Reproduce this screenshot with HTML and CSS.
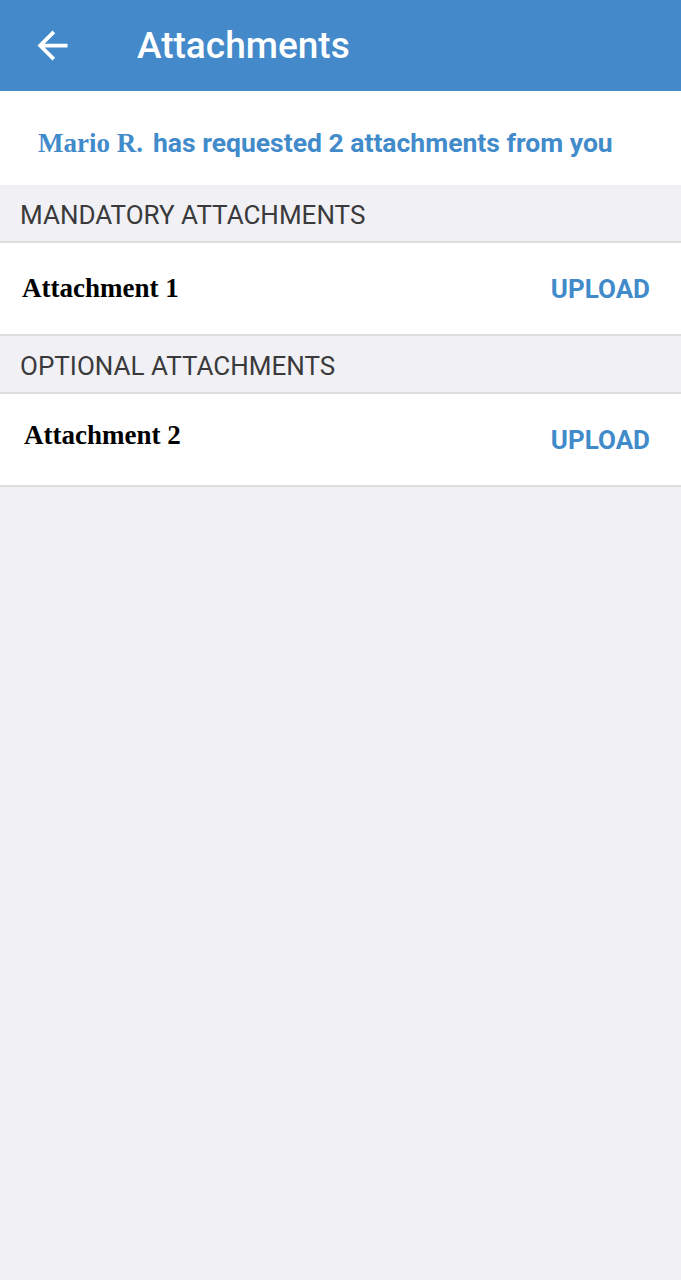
FILE: index.html
```html
<!DOCTYPE html>
<html lang="en">
<head>
    <meta name="viewport" content="width=device-width, initial-scale=1">
    <title>Attachments</title>
    <link rel="stylesheet" href="styles.css">
</head>
<body>
    <header class="topbar">
        <button class="back" type="button" aria-label="Back">
            <svg width="45" height="45" viewBox="0 0 24 24"><path fill="#fff" d="M20 11H7.83l5.59-5.59L12 4l-8 8 8 8 1.41-1.41L7.83 13H20v-2z"/></svg>
        </button>
        <h1>Attachments</h1>
    </header>

    <div class="request">
        <span class="who">Mario R.</span>
        <span>has requested 2 attachments from you</span>
    </div>

    <div class="section">MANDATORY ATTACHMENTS</div>
    <div class="item">
        <span class="name">Attachment 1</span>
        <a class="upload" href="#">UPLOAD</a>
    </div>

    <div class="section">OPTIONAL ATTACHMENTS</div>
    <div class="item">
        <span class="name second">Attachment 2</span>
        <a class="upload" href="#">UPLOAD</a>
    </div>
</body>
</html>
```

FILE: styles.css
```css
html, body {
    margin: 0;
    padding: 0;
}
body {
    background-color: #f1f1f5;
    font-family: Roboto, "Liberation Sans", sans-serif;
    min-height: 1280px;
}
.topbar {
    display: flex;
    align-items: center;
    height: 91px;
    background-color: #448aca;
    color: #fff;
}
.back {
    display: flex;
    border: none;
    background: none;
    padding: 0;
    margin: 0 0 0 30px;
    cursor: pointer;
}
.topbar h1 {
    margin: 0 0 0 62px;
    font-size: 37px;
    font-weight: 500;
}
.request {
    display: flex;
    align-items: baseline;
    gap: 10px;
    height: 94px;
    box-sizing: border-box;
    padding: 36px 0 0 38px;
    background-color: #fff;
    color: #428bca;
    font-size: 26.5px;
    font-weight: 700;
}
.request .who {
    font-family: "Liberation Serif", serif;
    font-size: 27px;
}
.section {
    height: 58px;
    box-sizing: border-box;
    padding: 15px 0 0 20px;
    border-bottom: 2px solid #dedede;
    color: #3a3a3c;
    font-size: 26px;
}
.item {
    display: flex;
    justify-content: space-between;
    align-items: center;
    height: 93px;
    box-sizing: border-box;
    padding: 0 31px 0 22px;
    background-color: #fff;
    border-bottom: 2px solid #dedede;
}
.name {
    font-family: "Liberation Serif", serif;
    font-size: 27px;
    font-weight: 700;
    color: #000;
}
.name.second {
    margin: -8px 0 0 2px;
}
.upload {
    color: #428bca;
    font-size: 26px;
    font-weight: 700;
    text-decoration: none;
}
```
